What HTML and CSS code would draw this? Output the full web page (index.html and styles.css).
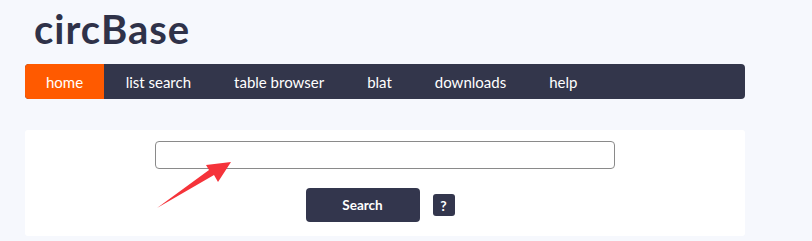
FILE: index.html
```html
<!DOCTYPE html>
<html lang="en">
<head>
<meta charset="utf-8">
<title>circBase</title>
<link rel="stylesheet" href="styles.css">
</head>
<body>
<div class="page">
  <h1 class="logo">circBase</h1>
  <nav class="nav">
    <a class="nav-item active" href="#">home</a>
    <a class="nav-item" href="#">list search</a>
    <a class="nav-item" href="#">table browser</a>
    <a class="nav-item" href="#">blat</a>
    <a class="nav-item" href="#">downloads</a>
    <a class="nav-item" href="#">help</a>
  </nav>
  <section class="card">
    <input class="search-input" type="text">
    <div class="actions">
      <button class="btn-search">Search</button>
      <button class="btn-help">?</button>
    </div>
    <svg class="arrow" width="90" height="60" viewBox="150 155 90 60">
      <polygon points="157,208 209,170 206,165 231,162 218,182 214,175" fill="#f5333a"/>
    </svg>
  </section>
</div>
</body>
</html>
```
FILE: styles.css
```css
* { box-sizing: border-box; }
html, body { margin: 0; padding: 0; background: #f6f8fd; }
body { font-family: Lato, "Open Sans", sans-serif; }
.page { width: 812px; height: 241px; padding: 0 0 0 25px; overflow: hidden; }
.logo {
  margin: 0;
  height: 64px;
  padding: 6px 0 0 9px;
  font-size: 40px;
  font-weight: 700;
  letter-spacing: 1px;
  color: #2f3249;
  line-height: 46px;
}
.nav {
  display: flex;
  width: 720px;
  height: 35px;
  background: #33364b;
  border-radius: 4px;
  overflow: hidden;
}
.nav-item {
  display: flex;
  align-items: center;
  padding: 0 21.5px;
  color: #ffffff;
  text-decoration: none;
  font-size: 15px;
}
.nav-item.active { background: #ff5a00; padding: 0 21px; }
.card {
  position: relative;
  margin-top: 31px;
  width: 720px;
  height: 106px;
  background: #ffffff;
  border-radius: 3px;
  display: flex;
  flex-direction: column;
  align-items: center;
  padding-top: 11px;
}
.search-input {
  width: 460px;
  height: 28px;
  border: 1px solid #8a8a8a;
  border-radius: 4px;
  background: #fff;
  margin: 0;
}
.actions {
  display: flex;
  align-items: center;
  gap: 13px;
  margin-top: 19px;
  margin-left: -10px;
}
.btn-search {
  width: 114px;
  height: 34px;
  background: #33364d;
  color: #fff;
  border: none;
  border-radius: 4px;
  font-family: Lato, sans-serif;
  font-weight: 700;
  font-size: 13.5px;
  padding: 0;
}
.btn-help {
  width: 22px;
  height: 22px;
  background: #33364d;
  color: #fff;
  border: none;
  border-radius: 3px;
  font-family: Lato, sans-serif;
  font-weight: 700;
  font-size: 14px;
  padding: 0;
}
.arrow { position: absolute; left: 125px; top: 25px; }
```
